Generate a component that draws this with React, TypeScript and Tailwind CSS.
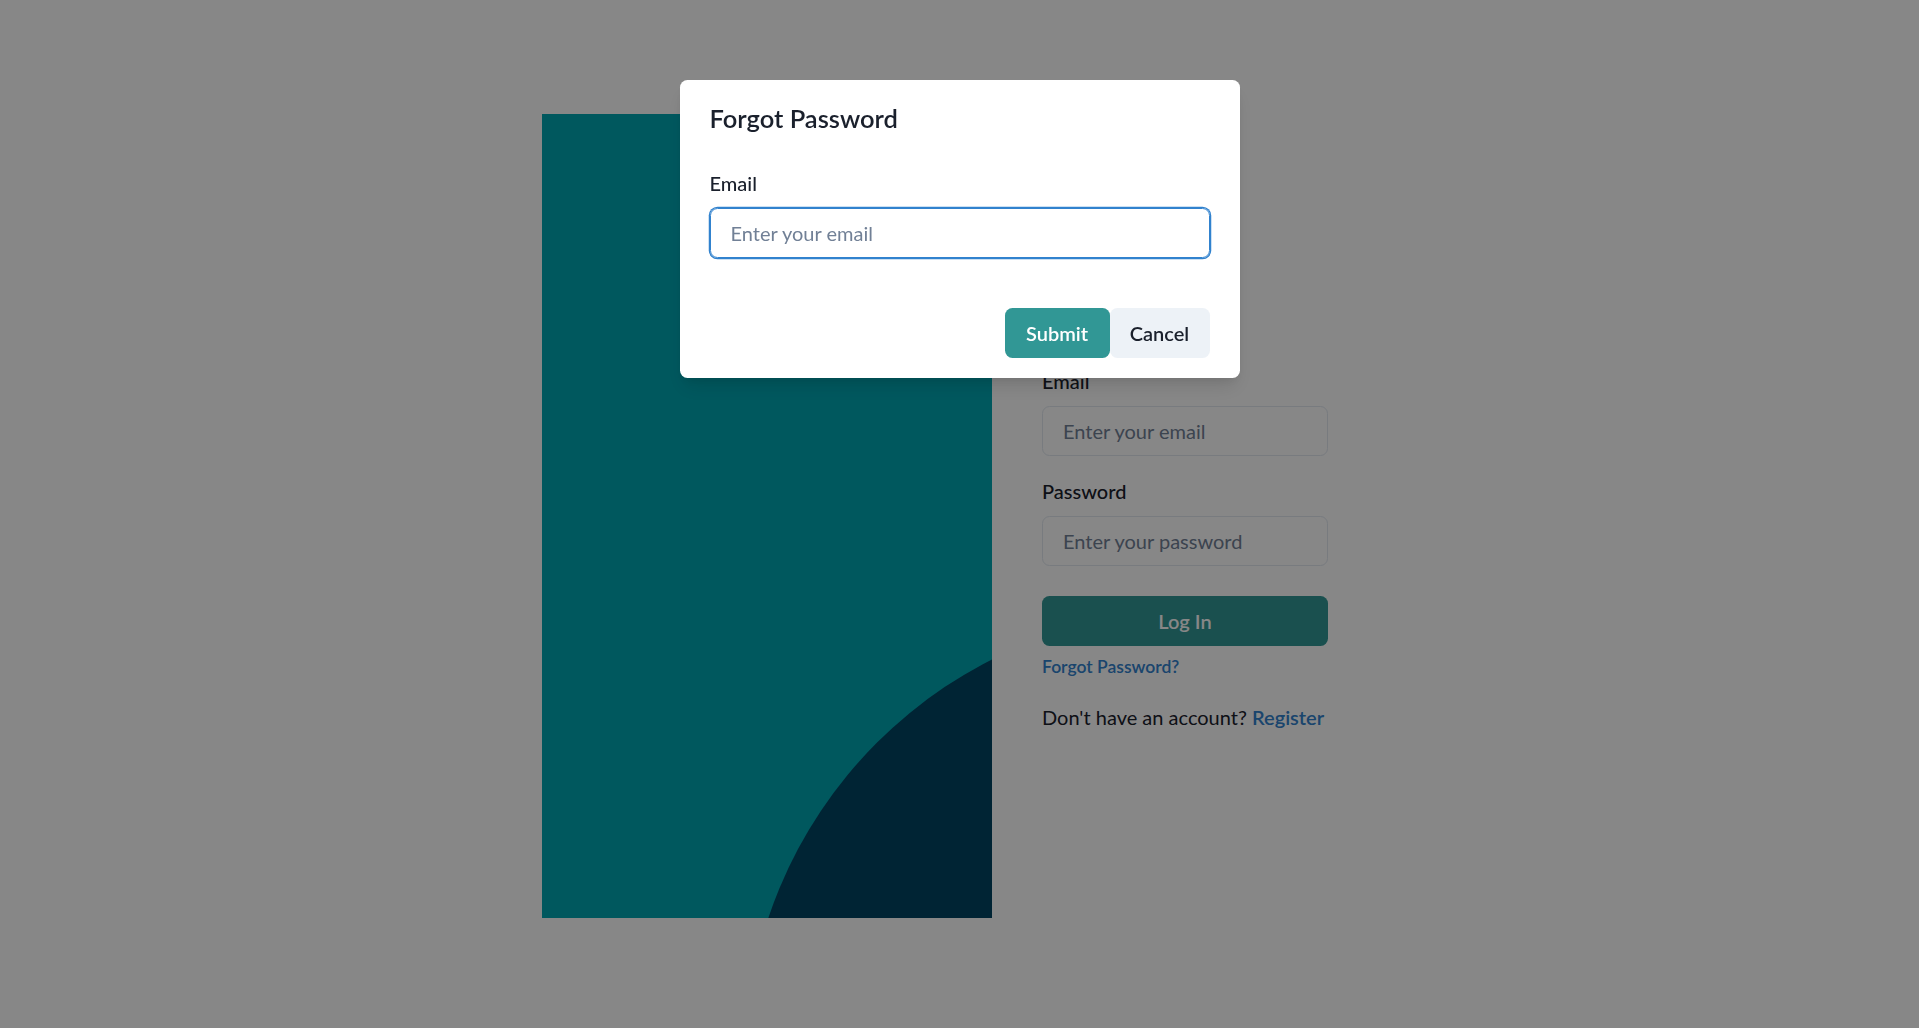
import React from "react";

export default function App() {
  return (
    <div className="relative min-h-screen w-full bg-white [font-family:Lato,'Noto_Sans',sans-serif]">
      <div className="min-h-screen w-full flex items-center justify-center pt-[4px]">
        <div className="flex items-center gap-[50px]">
          <div className="w-[450px] h-[804px] bg-[#00a6b2] overflow-hidden">
            <svg className="block" width="450" height="804" viewBox="0 0 450 804">
              <circle cx="653" cy="947" r="450" fill="#004462" />
            </svg>
          </div>
          <div className="w-[335px]">
            <form className="w-[286px] flex flex-col" onSubmit={(e) => e.preventDefault()}>
              <div className="h-[66px]" />
              <label className="text-[20px] leading-[30px] font-medium text-[#1a202c] mb-[10px]">Email</label>
              <input
                className="h-[50px] w-full rounded-[7.5px] border-[1.25px] border-[#e2e8f0] px-[20px] text-[20px] text-[#1a202c] placeholder:text-[#718096] outline-none bg-transparent"
                placeholder="Enter your email"
              />
              <label className="mt-[20px] text-[20px] leading-[30px] font-medium text-[#1a202c] mb-[10px]">Password</label>
              <input
                type="password"
                className="h-[50px] w-full rounded-[7.5px] border-[1.25px] border-[#e2e8f0] px-[20px] text-[20px] text-[#1a202c] placeholder:text-[#718096] outline-none bg-transparent"
                placeholder="Enter your password"
              />
              <button className="mt-[30px] h-[50px] w-full rounded-[7.5px] bg-[#319795] text-white text-[20px] font-semibold">
                Log In
              </button>
              <a className="mt-[8px] text-[17.5px] leading-[26px] font-semibold text-[#3182ce]">Forgot Password?</a>
              <p className="mt-[22px] text-[20px] leading-[30px] text-[#1a202c]">
                Don't have an account? <a className="font-semibold text-[#3182ce]">Register</a>
              </p>
            </form>
          </div>
        </div>
      </div>

      <div className="fixed inset-0 bg-black/[0.47]" />

      <div className="fixed inset-0 flex justify-center items-start pt-[80px]">
        <div className="w-[560px] bg-white rounded-[7.5px] shadow-[0_12px_19px_-4px_rgba(0,0,0,0.12),0_5px_8px_-2px_rgba(0,0,0,0.06)]">
          <div className="px-[30px] py-[20px] text-[25.5px] leading-[37.5px] font-semibold text-[#1a202c]">
            Forgot Password
          </div>
          <div className="px-[30px] pt-[10px] pb-[30px] flex flex-col">
            <label className="text-[20px] leading-[30px] font-medium text-[#1a202c] mb-[10px]">Email</label>
            <input
              className="h-[50px] w-full rounded-[7.5px] border-[1.25px] border-[#3182ce] shadow-[0_0_0_1.25px_#3182ce] px-[20px] text-[20px] text-[#1a202c] placeholder:text-[#718096] outline-none"
              placeholder="Enter your email"
            />
          </div>
          <div className="flex justify-end px-[30px] py-[20px]">
            <button className="h-[50px] w-[105px] rounded-[7.5px] bg-[#319795] text-white text-[20px] font-semibold">
              Submit
            </button>
            <button className="h-[50px] w-[100px] rounded-[7.5px] bg-[#edf2f7] text-[#1a202c] text-[20px] font-semibold">
              Cancel
            </button>
          </div>
        </div>
      </div>
    </div>
  );
}
